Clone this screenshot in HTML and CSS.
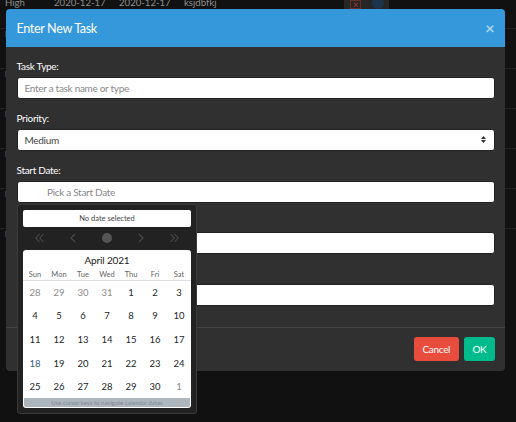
FILE: index.html
```html
<!DOCTYPE html>
<html>
<head>
<meta charset="utf-8">
<link rel="stylesheet" href="styles.css">
</head>
<body>
<div class="table">
  <div class="trow first">
    <span>High</span><span>2020-12-17</span><span>2020-12-17</span><span>ksjdbfkj</span>
    <span class="tbtn"><span class="xbox">×</span></span>
    <span class="tbtn"><span class="tdot"></span></span>
  </div>
  <div class="trow"><i class="tick"></i></div>
  <div class="trow"><i class="tick"></i></div>
  <div class="trow"><i class="tick"></i></div>
  <div class="trow"><i class="tick"></i></div>
  <div class="trow"><i class="tick"></i></div>
  <div class="trow"><i class="tick"></i></div>
</div>

<div class="modal">
  <div class="m-head">
    <span class="m-title">Enter New Task</span>
    <span class="m-close">×</span>
  </div>
  <div class="m-body">
    <div class="grp">
      <label>Task Type:</label>
      <input class="ctl" type="text" placeholder="Enter a task name or type">
    </div>
    <div class="grp">
      <label>Priority:</label>
      <div class="ctl sel"><span>Medium</span>
        <svg width="5" height="7" viewBox="0 0 5 7"><path d="M2.5 0L0 3h5z M2.5 7L0 4h5z" fill="#303030"/></svg>
      </div>
    </div>
    <div class="grp dp-grp">
      <label>Start Date:</label>
      <div class="ctl date">Pick a Start Date</div>
      <div class="dp">
        <div class="dp-head">No date selected</div>
        <div class="dp-nav">
          <svg width="9" height="10" viewBox="0 0 9 10"><polyline points="4.5,1 0.8,5 4.5,9" fill="none" stroke="#4a4a4a" stroke-width="1.1"/><polyline points="8.5,1 4.8,5 8.5,9" fill="none" stroke="#4a4a4a" stroke-width="1.1"/></svg>
          <svg width="6" height="10" viewBox="0 0 6 10"><polyline points="5,1 1,5 5,9" fill="none" stroke="#4a4a4a" stroke-width="1.1"/></svg>
          <span class="dp-dot"></span>
          <svg width="6" height="10" viewBox="0 0 6 10"><polyline points="1,1 5,5 1,9" fill="none" stroke="#4a4a4a" stroke-width="1.1"/></svg>
          <svg width="9" height="10" viewBox="0 0 9 10"><polyline points="0.5,1 4.2,5 0.5,9" fill="none" stroke="#4a4a4a" stroke-width="1.1"/><polyline points="4.5,1 8.2,5 4.5,9" fill="none" stroke="#4a4a4a" stroke-width="1.1"/></svg>
        </div>
        <div class="dp-cal">
          <div class="dp-title">April 2021</div>
          <div class="dp-wk"><span>Sun</span><span>Mon</span><span>Tue</span><span>Wed</span><span>Thu</span><span>Fri</span><span>Sat</span></div>
          <div class="dp-days">
            <span class="mute">28</span><span class="mute">29</span><span class="mute">30</span><span class="mute">31</span><span>1</span><span>2</span><span>3</span>
            <span>4</span><span>5</span><span>6</span><span>7</span><span>8</span><span>9</span><span>10</span>
            <span>11</span><span>12</span><span>13</span><span>14</span><span>15</span><span>16</span><span>17</span>
            <span class="today">18</span><span>19</span><span>20</span><span>21</span><span>22</span><span>23</span><span>24</span>
            <span>25</span><span>26</span><span>27</span><span>28</span><span>29</span><span>30</span><span class="mute">1</span>
          </div>
          <div class="dp-foot">Use cursor keys to navigate calendar dates</div>
        </div>
      </div>
    </div>
    <div class="grp">
      <label class="hidden-lbl"></label>
      <div class="ctl"></div>
    </div>
    <div class="grp">
      <label class="hidden-lbl"></label>
      <div class="ctl"></div>
    </div>
  </div>
  <div class="m-foot">
    <button class="btn btn-cancel">Cancel</button>
    <button class="btn btn-ok">OK</button>
  </div>
</div>
</body>
</html>
```

FILE: styles.css
```css
html, body {
  margin: 0;
  padding: 0;
}
body {
  background: #111;
  font-family: Lato, "Open Sans", sans-serif;
  width: 516px;
  height: 422px;
  overflow: hidden;
  position: relative;
}

/* background table (dimmed by backdrop) */
.trow {
  display: block;
  height: 40px;
  border-top: 1px solid #232323;
  box-sizing: border-box;
}
.trow.first {
  display: grid;
  grid-template-columns: 49px 65px 65px 160px 23px 22px;
  height: 28px;
  border-top: 0;
  padding-left: 5px;
  color: #8e8e8e;
  font-size: 9.6px;
  line-height: 6px;
  white-space: nowrap;
}
.tbtn {
  display: flex;
  justify-content: center;
  height: 12px;
  background: #262626;
}
.xbox {
  width: 11px;
  height: 9px;
  box-sizing: border-box;
  border: 1px solid #6e2a24;
  color: #b0392e;
  font-size: 9px;
  line-height: 7px;
  text-align: center;
}
.tdot {
  width: 12px;
  height: 12px;
  border-radius: 50%;
  background: #1d344c;
  margin-top: -3px;
}
.tick {
  display: block;
  width: 1px;
  height: 6px;
  margin: 2px 0 0 5px;
  background: #2e3b4e;
}

/* modal */
.modal {
  position: absolute;
  top: 9px;
  left: 6px;
  width: 499px;
  background: #303030;
  border-radius: 4px;
}
.m-head {
  height: 38px;
  box-sizing: border-box;
  background: #3498db;
  border-radius: 4px 4px 0 0;
  display: flex;
  align-items: center;
  justify-content: space-between;
  padding: 0 10.5px 0 10.5px;
  color: #fff;
}
.m-title {
  font-size: 12.6px;
  letter-spacing: -0.35px;
  line-height: 17px;
}
.m-close {
  font-size: 16px;
  font-weight: 700;
  line-height: 1;
  color: rgba(255, 255, 255, 0.6);
}
.m-body {
  padding: 11px 10.5px 10px;
}
.grp {
  margin-bottom: 10.75px;
}
.dp-grp {
  position: relative;
}
label {
  display: block;
  height: 17px;
  font-size: 10px;
  letter-spacing: -0.3px;
  line-height: 17px;
  margin-bottom: 2px;
  color: #fff;
  white-space: nowrap;
}
.ctl {
  display: block;
  box-sizing: border-box;
  width: 100%;
  height: 22px;
  margin: 0;
  background: #fff;
  border: 1px solid #222;
  border-radius: 3px;
  padding: 0 7px;
  font-family: Lato, "Open Sans", sans-serif;
  font-size: 10px;
  letter-spacing: -0.3px;
  line-height: 20px;
  color: #444;
  outline: none;
}
.ctl::placeholder {
  color: #888;
}
.sel {
  display: flex;
  align-items: center;
  justify-content: space-between;
  padding-right: 8px;
}
.date {
  padding-left: 29.5px;
  color: #888;
}

/* footer */
.m-foot {
  border-top: 1px solid #444;
  padding: 9.5px 10px 9.5px;
  display: flex;
  justify-content: flex-end;
  gap: 5px;
}
.btn {
  height: 24px;
  border: 0;
  border-radius: 3px;
  color: #fff;
  font-family: Lato, "Open Sans", sans-serif;
  font-size: 10px;
  letter-spacing: -0.3px;
  padding: 0 8.6px;
}
.btn-cancel {
  background: #e74c3c;
}
.btn-ok {
  background: #00bc8c;
}

/* datepicker popup */
.dp {
  position: absolute;
  top: calc(100% + 1px);
  left: 0.5px;
  z-index: 5;
  width: 180px;
  box-sizing: border-box;
  border: 1px solid #3a3a3a;
  background: #222;
  border-radius: 3px;
  padding: 5px;
}
.dp-head {
  height: 17px;
  line-height: 17px;
  background: #fff;
  border-radius: 2px;
  text-align: center;
  font-size: 7.5px;
  color: #444;
}
.dp-nav {
  height: 23px;
  display: grid;
  grid-template-columns: repeat(5, 1fr);
  align-items: center;
  justify-items: center;
}
.dp-nav svg {
  display: block;
}
.dp-dot {
  width: 10px;
  height: 10px;
  border-radius: 50%;
  background: #555;
}
.dp-cal {
  background: #fff;
  border-radius: 3px;
  padding-bottom: 1px;
}
.dp-title {
  height: 20px;
  line-height: 20px;
  text-align: center;
  font-size: 10px;
  letter-spacing: -0.15px;
  color: #222;
}
.dp-wk {
  display: grid;
  grid-template-columns: repeat(7, 24px);
  height: 10px;
  line-height: 10px;
  font-size: 7.5px;
  color: #666;
  text-align: center;
  border-bottom: 1px solid #dee2e6;
}
.dp-days {
  display: grid;
  grid-template-columns: repeat(7, 24px);
  grid-auto-rows: 23.6px;
  align-items: center;
  text-align: center;
  font-size: 9.5px;
  color: #212529;
}
.dp-days .mute {
  color: #8a8a8a;
}
.dp-days .today {
  color: #375a7f;
}
.dp-foot {
  height: 9px;
  line-height: 9px;
  margin: 0 1px;
  background: #adb5bd;
  font-size: 6px;
  color: #858c93;
  text-align: center;
  border-radius: 0 0 2px 2px;
  white-space: nowrap;
}
```
